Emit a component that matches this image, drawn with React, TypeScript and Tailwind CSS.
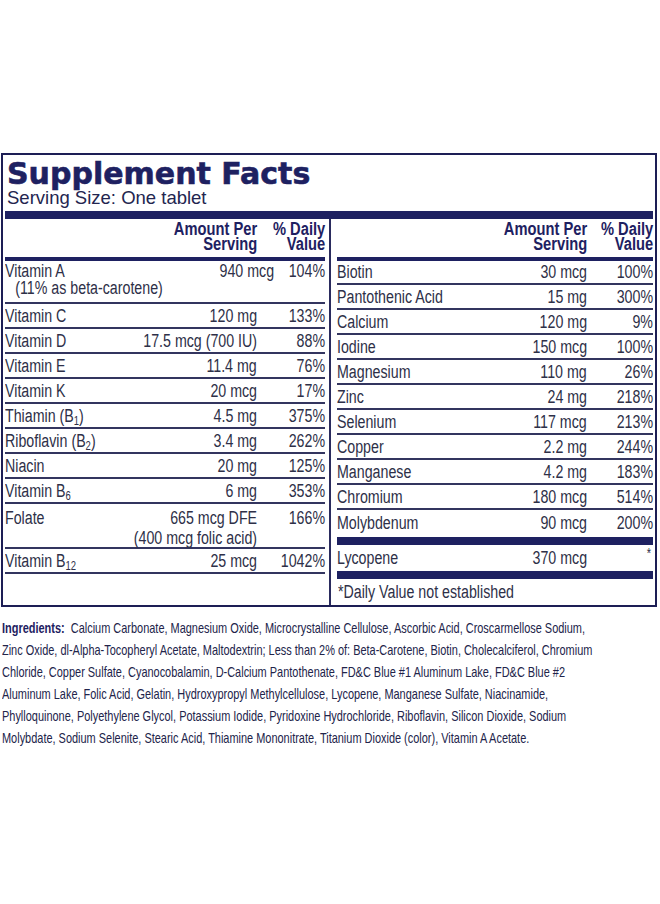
import React from "react";

const FONT = "font-['Liberation_Sans',Arial,sans-serif]";

function S({ children }: { children: React.ReactNode }) {
  return <sub className="text-[12px]">{children}</sub>;
}

function NL({ children }: { children: React.ReactNode }) {
  return <div className="inline-block origin-left scale-x-[0.79] whitespace-nowrap">{children}</div>;
}
function NR({ children }: { children: React.ReactNode }) {
  return <div className="inline-block origin-right scale-x-[0.79] whitespace-nowrap text-right">{children}</div>;
}

type RowProps = {
  name: React.ReactNode;
  amount?: React.ReactNode;
  dv?: React.ReactNode;
  dvW: string;
  cls: string;
  line?: boolean;
};

function Row({ name, amount, dv, dvW, cls, line = true }: RowProps) {
  return (
    <div className={`flex ${line ? "border-b-2 border-[#33355f]" : ""} ${cls}`}>
      <div className="flex-1 whitespace-nowrap">
        <NL>{name}</NL>
      </div>
      <div className="text-right whitespace-nowrap">
        <NR>{amount}</NR>
      </div>
      <div className={`${dvW} text-right whitespace-nowrap`}>
        <NR>{dv}</NR>
      </div>
    </div>
  );
}

function Header({ dvW }: { dvW: string }) {
  return (
    <>
      <div className="flex h-[38px] pt-[3px] text-[17.5px] leading-[15px] font-bold text-[#1e2161]">
        <div className="flex-1" />
        <div className="text-right">
          <div className="inline-block origin-right scale-x-[0.84] whitespace-nowrap">
            <div>Amount Per</div>
            <div>Serving</div>
          </div>
        </div>
        <div className={`${dvW} text-right`}>
          <div className="inline-block origin-right scale-x-[0.84] whitespace-nowrap">
            <div>% Daily</div>
            <div>Value</div>
          </div>
        </div>
      </div>
      <div className="h-[4px] bg-[#1e2161]" />
    </>
  );
}

const single = "h-[25px] pt-[1px] leading-[22px]";

export default function App() {
  const L = "w-[68px]";
  const R = "w-[66px]";
  const ingredients = [
    "Calcium Carbonate, Magnesium Oxide, Microcrystalline Cellulose, Ascorbic Acid, Croscarmellose Sodium,",
    "Zinc Oxide, dl-Alpha-Tocopheryl Acetate, Maltodextrin; Less than 2% of: Beta-Carotene, Biotin, Cholecalciferol, Chromium",
    "Chloride, Copper Sulfate, Cyanocobalamin, D-Calcium Pantothenate, FD&C Blue #1 Aluminum Lake, FD&C Blue #2",
    "Aluminum Lake, Folic Acid, Gelatin, Hydroxypropyl Methylcellulose, Lycopene, Manganese Sulfate, Niacinamide,",
    "Phylloquinone, Polyethylene Glycol, Potassium Iodide, Pyridoxine Hydrochloride, Riboflavin, Silicon Dioxide, Sodium",
    "Molybdate, Sodium Selenite, Stearic Acid, Thiamine Mononitrate, Titanium Dioxide (color), Vitamin A Acetate.",
  ];
  return (
    <div className={`w-[660px] h-[904px] bg-white overflow-hidden ${FONT}`}>
      <div className="ml-[1px] mt-[153px] w-[656px] border-2 border-[#1d1e55] px-[2px]">
        <div className="pt-[4px] h-[34px] leading-[30px] text-[30px] font-bold text-[#1e2161] font-['DejaVu_Sans',sans-serif] pl-[2px] [-webkit-text-stroke:0.6px_#1e2161]">
          Supplement Facts
        </div>
        <div className="h-[18px] leading-[18px] text-[18.5px] text-[#23254f] pl-[2px]">
          Serving Size: One tablet
        </div>
        <div className="mt-[4px] h-[8px] bg-[#1e2161]" />
        <div className="flex text-[18px] text-[#2e3048]">
          {/* left column */}
          <div className="w-[320px]">
            <Header dvW={L} />
            <Row
              dvW={L}
              cls="h-[43px] pt-[2px] leading-[17px]"
              name={
                <>
                  <div>Vitamin A</div>
                  <div className="pl-[13px]">(11% as beta-carotene)</div>
                </>
              }
              amount="940 mcg"
              dv="104%"
            />
            <Row dvW={L} cls={single} name="Vitamin C" amount="120 mg" dv="133%" />
            <Row dvW={L} cls={single} name="Vitamin D" amount="17.5 mcg (700 IU)" dv="88%" />
            <Row dvW={L} cls={single} name="Vitamin E" amount="11.4 mg" dv="76%" />
            <Row dvW={L} cls={single} name="Vitamin K" amount="20 mcg" dv="17%" />
            <Row dvW={L} cls={single} name={<>Thiamin (B<S>1</S>)</>} amount="4.5 mg" dv="375%" />
            <Row dvW={L} cls={single} name={<>Riboflavin (B<S>2</S>)</>} amount="3.4 mg" dv="262%" />
            <Row dvW={L} cls={single} name="Niacin" amount="20 mg" dv="125%" />
            <Row dvW={L} cls={single} name={<>Vitamin B<S>6</S></>} amount="6 mg" dv="353%" />
            <Row
              dvW={L}
              cls="h-[45px] pt-[4px] leading-[20px]"
              name="Folate"
              amount={
                <>
                  <div>665 mcg DFE</div>
                  <div>(400 mcg folic acid)</div>
                </>
              }
              dv="166%"
            />
            <Row dvW={L} cls={single} name={<>Vitamin B<S>12</S></>} amount="25 mcg" dv="1042%" />
          </div>
          {/* right column */}
          <div className="ml-[4px] border-l-2 border-[#2a2b5e] pl-[6px] flex-1">
            <Header dvW={R} />
            <Row dvW={R} cls="h-[24px] leading-[22px]" name="Biotin" amount="30 mcg" dv="100%" />
            <Row dvW={R} cls={single} name="Pantothenic Acid" amount="15 mg" dv="300%" />
            <Row dvW={R} cls={single} name="Calcium" amount="120 mg" dv="9%" />
            <Row dvW={R} cls={single} name="Iodine" amount="150 mcg" dv="100%" />
            <Row dvW={R} cls={single} name="Magnesium" amount="110 mg" dv="26%" />
            <Row dvW={R} cls={single} name="Zinc" amount="24 mg" dv="218%" />
            <Row dvW={R} cls={single} name="Selenium" amount="117 mcg" dv="213%" />
            <Row dvW={R} cls={single} name="Copper" amount="2.2 mg" dv="244%" />
            <Row dvW={R} cls={single} name="Manganese" amount="4.2 mg" dv="183%" />
            <Row dvW={R} cls={single} name="Chromium" amount="180 mcg" dv="514%" />
            <Row dvW={R} line={false} cls="h-[27px] pt-[2px] leading-[22px]" name="Molybdenum" amount="90 mcg" dv="200%" />
            <div className="h-[8px] bg-[#1e2161]" />
            <Row
              dvW={R}
              line={false}
              cls="h-[26px] pt-[2px] leading-[22px]"
              name="Lycopene"
              amount="370 mcg"
              dv={<span className="text-[14px] leading-[12px] align-top pr-[3px]">*</span>}
            />
            <div className="h-[8px] bg-[#1e2161]" />
            <div className="h-[26px] pt-[2px] leading-[22px] pl-[1px]">
              <NL>*Daily Value not established</NL>
            </div>
          </div>
        </div>
      </div>
      <div className="mt-[10px] pl-[2px] text-[15px] leading-[22px] text-[#22244a]">
        {ingredients.map((l, i) => (
          <div key={i} className="whitespace-nowrap">
            <div className="inline-block origin-left scale-x-[0.73] whitespace-nowrap">
              {i === 0 && <span className="font-bold text-[#1e2161]">Ingredients:&nbsp; </span>}
              {l}
            </div>
          </div>
        ))}
      </div>
    </div>
  );
}
